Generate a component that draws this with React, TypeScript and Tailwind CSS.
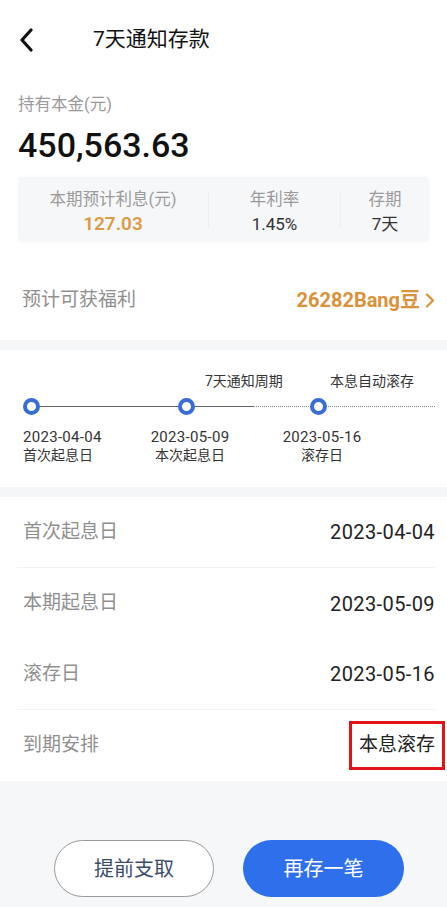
const font = "font-['Roboto','Noto_Sans_CJK_SC',sans-serif]";

function DetailRow({ label, value, divider }: { label: string; value: string; divider?: boolean }) {
  return (
    <div
      className={[
        "ml-[17px] mr-[12px] flex h-[71px] items-center justify-between",
        divider ? "border-b border-[#f1f2f4]" : "",
      ].join(" ")}
    >
      <span className="pl-[6px] text-[19px] text-[#8f8f8f]">{label}</span>
      <span className="text-[20px] tracking-[0.4px] text-[#222]">{value}</span>
    </div>
  );
}

function Dot({ left }: { left: number }) {
  return (
    <div
      className="absolute top-[48px] h-[17px] w-[17px] rounded-full border-[4px] border-[#3a6dd4] bg-white"
      style={{ left: left - 8.5 }}
    />
  );
}

export default function App() {
  return (
    <div className={`${font} min-h-[907px] w-[447px] bg-white`}>
      {/* header */}
      <div className="flex h-[80px] items-center">
        <svg width="16" height="24" viewBox="0 0 16 24" className="ml-[18px]">
          <path d="M13 2 L4 12 L13 22" fill="none" stroke="#111" strokeWidth="3.2" strokeLinecap="round" strokeLinejoin="round" />
        </svg>
        <span className="ml-[59px] text-[21px] text-[#111]">7天通知存款</span>
      </div>

      {/* summary */}
      <div className="px-[18px]">
        <p className="mt-[14px] text-[16.5px] leading-[22px] text-[#9a9a9a]">持有本金(元)</p>
        <p className="mt-[9px] text-[34px] font-medium leading-[40px] text-[#111]">450,563.63</p>
        <div className="mt-[12px] flex h-[65px] rounded-[4px] bg-[#f6f7f9] shadow-[0_0_4px_rgba(0,0,0,0.03)]">
          <div className="flex w-[190px] flex-col items-center pt-[13px]">
            <span className="text-[16.5px] leading-[20px] text-[#9a9a9a]">本期预计利息(元)</span>
            <span className="mt-[2px] text-[19px] font-semibold leading-[24px] text-[#dc9a45]">127.03</span>
          </div>
          <div className="my-[14px] w-px bg-[#eceef1]" />
          <div className="flex w-[131px] flex-col items-center pt-[13px]">
            <span className="text-[16.5px] leading-[20px] text-[#9a9a9a]">年利率</span>
            <span className="mt-[2px] text-[17px] leading-[24px] text-[#333]">1.45%</span>
          </div>
          <div className="my-[14px] w-px bg-[#eceef1]" />
          <div className="flex flex-1 flex-col items-center pt-[13px]">
            <span className="text-[16.5px] leading-[20px] text-[#9a9a9a]">存期</span>
            <span className="mt-[2px] text-[17px] leading-[24px] text-[#333]">7天</span>
          </div>
        </div>
      </div>

      {/* welfare */}
      <div className="mt-[28px] flex h-[60px] items-center justify-between pl-[22px] pr-[12px]">
        <span className="text-[19px] text-[#8f8f8f]">预计可获福利</span>
        <span className="flex items-center gap-[5px] text-[20px] font-bold text-[#d9923a]">
          26282Bang豆
          <svg width="10" height="15" viewBox="0 0 10 15">
            <path d="M2 1.5 L8 7.5 L2 13.5" fill="none" stroke="#d9923a" strokeWidth="2.2" strokeLinecap="round" strokeLinejoin="round" />
          </svg>
        </span>
      </div>
      <div className="mt-[10px] h-[10px] bg-[#f5f6f8]" />

      {/* timeline */}
      <div className="relative h-[137px] text-[#333]">
        <span className="absolute left-[205px] top-[21px] text-[14px] leading-[20px]">7天通知周期</span>
        <span className="absolute left-[330px] top-[21px] text-[14px] leading-[20px]">本息自动滚存</span>
        <div className="absolute left-[31px] top-[55.5px] h-[1.5px] w-[222px] bg-[#5d646e]" />
        <div className="absolute left-[253px] top-[56px] w-[182px] border-t border-dotted border-[#8a8a8a]" />
        <Dot left={31} />
        <Dot left={186} />
        <Dot left={318} />
        <div className="absolute left-[23px] top-[78px] flex flex-col items-start">
          <span className="text-[15px] leading-[18px] tracking-[0.3px]">2023-04-04</span>
          <span className="text-[14px] leading-[18px]">首次起息日</span>
        </div>
        <div className="absolute left-[150px] top-[78px] flex w-[80px] flex-col items-center">
          <span className="text-[15px] leading-[18px] tracking-[0.3px]">2023-05-09</span>
          <span className="text-[14px] leading-[18px]">本次起息日</span>
        </div>
        <div className="absolute left-[282px] top-[78px] flex w-[80px] flex-col items-center">
          <span className="text-[15px] leading-[18px] tracking-[0.3px]">2023-05-16</span>
          <span className="text-[14px] leading-[18px]">滚存日</span>
        </div>
      </div>
      <div className="h-[10px] bg-[#f5f6f8]" />

      {/* details */}
      <div className="bg-white">
        <DetailRow label="首次起息日" value="2023-04-04" divider />
        <DetailRow label="本期起息日" value="2023-05-09" />
        <DetailRow label="滚存日" value="2023-05-16" divider />
        <div className="ml-[17px] mr-[12px] flex h-[71px] items-center justify-between">
          <span className="pl-[6px] text-[19px] text-[#8f8f8f]">到期安排</span>
          <span className="-mr-[10px] flex h-[49px] w-[96px] items-center justify-center border-[3px] border-[#e3131b] text-[19px] text-[#222]">
            本息滚存
          </span>
        </div>
      </div>

      {/* bottom actions */}
      <div className="h-[128px] bg-[#f6f7f9] pt-[59px]">
        <div className="flex gap-[29px] pl-[54px]">
          <button
            type="button"
            className="h-[57px] w-[160px] rounded-full border border-[#9a9a9a] bg-white text-[20px] text-[#3a4c6b]"
          >
            提前支取
          </button>
          <button type="button" className="h-[57px] w-[161px] rounded-full bg-[#2e6fec] text-[20px] text-white">
            再存一笔
          </button>
        </div>
      </div>
    </div>
  );
}
